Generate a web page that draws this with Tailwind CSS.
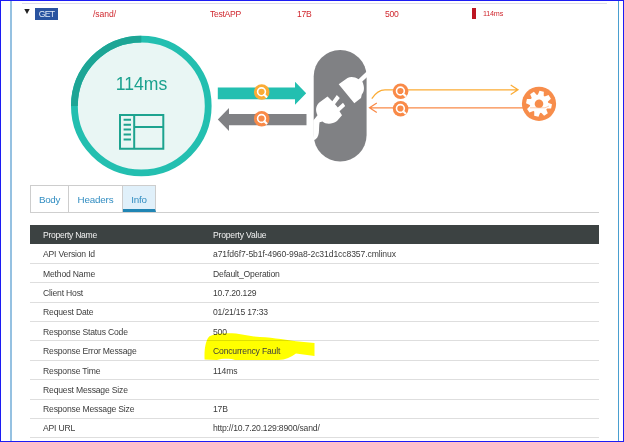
<!DOCTYPE html>
<html lang="en">
<head>
<meta charset="utf-8">
<title>API call details</title>
<script src="https://cdn.jsdelivr.net/npm/@tailwindcss/browser@4"></script>
</head>
<body class="bg-white">
<div class="w-[624px] h-[442px] overflow-hidden border border-[#1c1cf4] pl-[9px] pr-[4px] font-['Liberation_Sans',Arial,sans-serif]">
<div class="h-full border-l-2 border-l-[#95c1e1] border-r border-r-[#4a9fd0] flex flex-col">

  <div class="ml-[10px] mr-[11px] mt-[2px] h-[20px] shrink-0 border-t border-[#dcdcea] flex items-center text-[8.6px] leading-[10px] text-[#d0282f]">
    <div class="w-[13px] pl-[2px] pb-[4px]"><svg width="6" height="5" class="block"><path d="M0.3 0H5.7L3 5Z" fill="#222"/></svg></div>
    <div class="mt-[1px] w-[23px] h-[12px] bg-[#2953a0] text-[#e4ebf7] text-[8.6px] leading-[12px] text-center tracking-[-0.7px]">GET</div>
    <div class="w-[145px] pl-[35px] tracking-[-0.05px]">/sand/</div>
    <div class="w-[87px] pl-[7px] tracking-[-0.3px]">TestAPP</div>
    <div class="w-[87px] pl-[7px] tracking-[-0.3px]">17B</div>
    <div class="w-[95px] pl-[8px] tracking-[-0.3px]">500</div>
    <div class="w-[4px] h-[11px] bg-[#bd1622]"></div>
    <div class="pl-[7px] text-[7.2px] tracking-[-0.2px]">114ms</div>
  </div>

  <svg class="block shrink-0 ml-[19px]" width="568" height="162" viewBox="31 23 568 162">
    <defs>
      <g id="lens" fill="none" stroke="#fff" stroke-width="1.6"><circle cx="-.2" cy="-.2" r="3.9"/><path d="M2 2.1L5.4 5.4" stroke-width="2.1"/></g>
    </defs>
    <circle cx="141.3" cy="106" r="66.9" fill="#e9f6f4" stroke="#23bfb0" stroke-width="6.8"/>
    <path d="M74.4 106A66.9 66.9 0 0 1 141.3 39.1" fill="none" stroke="#1da595" stroke-width="6.8"/>
    <text x="115.8" y="89.9" font-size="18" textLength="51.5" lengthAdjust="spacingAndGlyphs" fill="#1aa18e">114ms</text>
    <g fill="none" stroke="#1da38f" stroke-width="2">
      <path d="M120 115H163.3V148.8H120ZM134.2 115V148.8M134.2 127H163.3M123.6 119.8H131M123.6 124.7H131M123.6 129.6H131M123.6 134.5H131M123.6 139.4H131"/>
    </g>

    <path d="M217.8 87.4H295V81.8L306.2 93.3L295 104.8V99.2H217.8Z" fill="#23bfb0"/>
    <path d="M306.5 114H229V108L217.8 119.6L229 131V125.3H306.5Z" fill="#808184"/>
    <circle cx="261.7" cy="92" r="7.8" fill="#fbac35"/><use href="#lens" x="261.7" y="92"/>
    <circle cx="261.7" cy="118.7" r="7.8" fill="#f98a48"/><use href="#lens" x="261.7" y="118.7"/>

    <rect x="313.7" y="50" width="52.9" height="111.5" rx="26.4" fill="#808184"/>
    <g fill="#fff">
      <path d="M338.7 84.3L347.5 78C351 76.2 355 77 358.5 79.3L367.2 71V77L362.3 81.5C364.8 87 364.4 91.5 361.8 94.5L361 98L354.3 103.2Z"/>
      <path d="M327.5 96.6L332.3 101.2L336.8 95L339.8 98L335 104.3L337.8 107.5L343 102.8L345.2 106L339.5 111.2L342 115.3L337 121C332 124.5 326 124.5 322.5 121.5L319.6 122.3C318.2 129 321 138 313.3 140.5V120.5L317.5 115.3C315 110 316 105.8 319 102.8Z"/>
    </g>

    <path d="M371.8 98.6Q377.5 89.8 385 89.8H517.5M510.7 85L518 89.8L510.7 94.5" fill="none" stroke="#fbac35" stroke-width="1.25"/>
    <path d="M524 107.8H369.5M376.8 103L369.5 107.8L376.8 112.5" fill="none" stroke="#f98a48" stroke-width="1.25"/>
    <circle cx="400.6" cy="91.2" r="7.8" fill="#f98a48"/><use href="#lens" x="400.6" y="91.2"/>
    <circle cx="400.6" cy="108.7" r="7.8" fill="#f98a48"/><use href="#lens" x="400.6" y="108.7"/>

    <circle cx="539" cy="103.8" r="17.1" fill="#f78d4b"/>
    <g transform="translate(539 103.8) rotate(12)">
      <circle r="6.8" fill="none" stroke="#fff" stroke-width="5"/>
      <g fill="#fff">
        <path id="tooth" d="M-3.1 -8L-2.2 -12.8H2.2L3.1 -8Z"/>
        <use href="#tooth" transform="rotate(45)"/><use href="#tooth" transform="rotate(90)"/><use href="#tooth" transform="rotate(135)"/><use href="#tooth" transform="rotate(180)"/><use href="#tooth" transform="rotate(225)"/><use href="#tooth" transform="rotate(270)"/><use href="#tooth" transform="rotate(315)"/>
      </g>
    </g>
    <path d="M530 107.8H545L549 106" fill="none" stroke="#f9b68c" stroke-width=".7"/>
  </svg>

  <div class="ml-[18px] mr-[19px] h-[28px] shrink-0 flex border-b border-[#cfcfcf] text-[9.8px] leading-[27px] text-[#338ec2]">
    <div class="w-[39px] border-x border-t border-[#cdcdcd] text-center tracking-[-0.3px]">Body</div>
    <div class="w-[54px] border-r border-t border-[#cdcdcd] text-center tracking-[-0.15px]">Headers</div>
    <div class="w-[33px] border-r border-t border-[#cdcdcd] border-b-3 border-b-[#2085b4] bg-[#e0f0fa] text-center tracking-[-0.25px]">Info</div>
  </div>

  <div class="mt-[12px] ml-[18px] mr-[19px] text-[8.6px] leading-[10px] tracking-[-0.18px] text-[#3c3c3c]">
    <div class="h-[19px] flex items-center bg-[#3c4242] text-[#f2f2f2] pl-[13px] pt-[1px]"><div class="w-[170px] tracking-[-0.3px]">Property Name</div><div class="tracking-[-0.2px]">Property Value</div></div>
    <div class="h-[20px] flex items-center border-b border-[#dedede] pl-[13px] pt-[1px]"><div class="w-[170px]">API Version Id</div><div class="tracking-[-0.1px]">a71fd6f7-5b1f-4960-99a8-2c31d1cc8357.cmlinux</div></div>
    <div class="h-[19px] flex items-center border-b border-[#dedede] pl-[13px] pt-[2px]"><div class="w-[170px]">Method Name</div><div>Default_Operation</div></div>
    <div class="h-[20px] flex items-center border-b border-[#dedede] pl-[13px] pt-[1px]"><div class="w-[170px]">Client Host</div><div>10.7.20.129</div></div>
    <div class="h-[19px] flex items-center border-b border-[#dedede] pl-[13px]"><div class="w-[170px]">Request Date</div><div>01/21/15 17:33</div></div>
    <div class="h-[19px] flex items-center border-b border-[#dedede] pl-[13px] pt-[1px]"><div class="w-[170px]">Response Status Code</div><div>500</div></div>
    <div class="relative h-[20px] flex items-center border-b border-[#dedede] pl-[13px] pt-[1px]">
      <svg class="absolute left-[174px] top-[-9px] mix-blend-multiply" width="112" height="29"><path d="M.6 27.5C0 17 2 7 5.5 4.2C12 1 23 1 32 1.5L50 4.5C66 5.5 78 7 92 9.3L110.5 11V24L92 21.5C87 25 82 28 74 28H31C28 26.5 18 26 13 28Z" fill="#ff0"/></svg>
      <div class="w-[170px]">Response Error Message</div><div class="relative">Concurrency Fault</div>
    </div>
    <div class="h-[19px] flex items-center border-b border-[#dedede] pl-[13px] pt-[1px]"><div class="w-[170px]">Response Time</div><div>114ms</div></div>
    <div class="h-[20px] flex items-center border-b border-[#dedede] pl-[13px] pt-[1px]"><div class="w-[170px]">Request Message Size</div></div>
    <div class="h-[19px] flex items-center border-b border-[#dedede] pl-[13px]"><div class="w-[170px]">Response Message Size</div><div>17B</div></div>
    <div class="h-[19px] flex items-center border-b border-[#dedede] pl-[13px]"><div class="w-[170px]">API URL</div><div>http://10.7.20.129:8900/sand/</div></div>
  </div>
</div>
</div>
</body>
</html>
